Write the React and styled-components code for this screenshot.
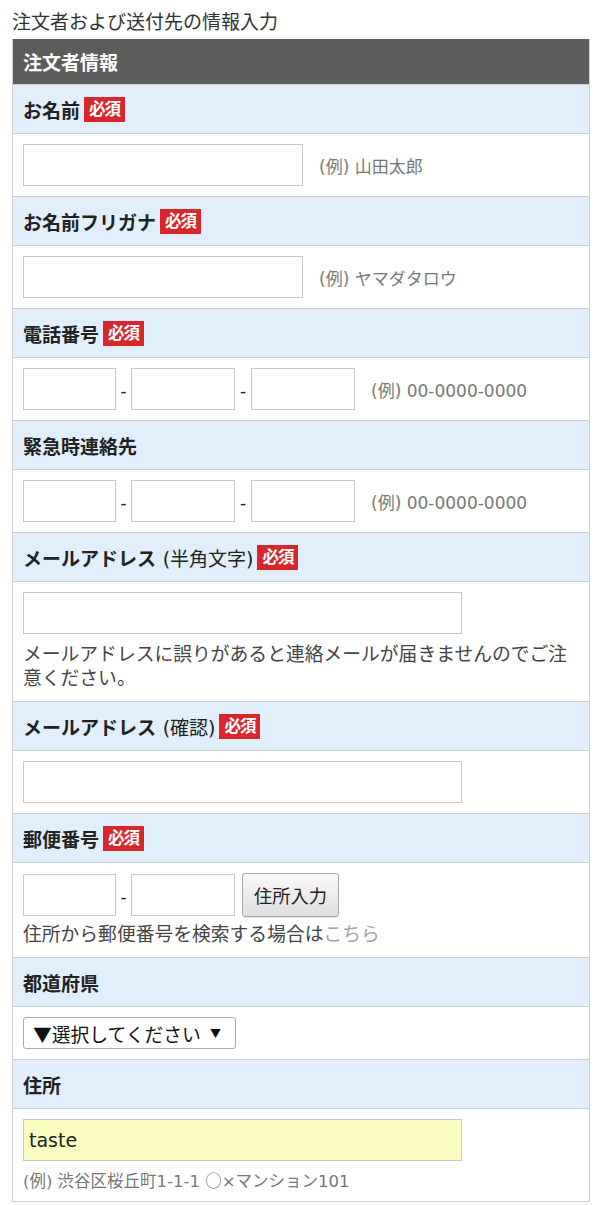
import React from "react";
import styled, { createGlobalStyle } from "styled-components";

const GlobalStyle = createGlobalStyle`
  * { box-sizing: border-box; }
  html, body { margin: 0; padding: 0; background: #ffffff; }
  body {
    font-family: "DejaVu Sans", "Noto Sans CJK JP", "Liberation Sans", sans-serif;
    color: #222;
  }
`;

const Page = styled.div`
  padding: 0 10px 0 12px;
`;

const Title = styled.div`
  font-size: 19px;
  line-height: 24px;
  color: #333;
  padding: 10px 0 5px;
  white-space: nowrap;
`;

const FormTable = styled.div`
  width: 578px;
  border: 1px solid #cfcfcf;
  border-top: none;
  display: flex;
  flex-direction: column;
`;

const TableHeader = styled.div`
  height: 45px;
  background: #5c5c5c;
  color: #ffffff;
  font-weight: 700;
  font-size: 19px;
  display: flex;
  align-items: center;
  padding: 0 10px;
`;

const LabelRow = styled.div`
  height: 49px;
  border-top: 1px solid #cfcfcf;
  background: #e1eefc;
  display: flex;
  align-items: center;
  gap: 4px;
  padding: 0 10px;
`;

const LabelText = styled.span`
  font-size: 19px;
  font-weight: 700;
  color: #222;
  white-space: nowrap;
`;

const LabelSub = styled.span`
  font-weight: 400;
`;

const RequiredBadge = styled.span`
  display: inline-block;
  background: #d9262b;
  color: #ffffff;
  font-weight: 700;
  font-size: 16.5px;
  height: 25px;
  line-height: 25px;
  padding: 0 5px;
  letter-spacing: -1px;
`;

const FieldRow = styled.div`
  border-top: 1px solid #cfcfcf;
  background: #ffffff;
  padding: 10px 10px ${(p) => p.$bottom || 10}px;
  display: flex;
  flex-direction: column;
  align-items: flex-start;
`;

const InlineGroup = styled.div`
  display: flex;
  align-items: center;
`;

const TextInput = styled.input`
  width: ${(p) => p.$width}px;
  height: 42px;
  border: 1px solid #c9c9c9;
  background: ${(p) => (p.$highlight ? "#fbfcc1" : "#ffffff")};
  font-family: inherit;
  font-size: 19px;
  color: #222;
  padding: 0 5px;
  outline: none;
  margin: 0;
`;

const Dash = styled.span`
  width: ${(p) => p.$w || 15}px;
  text-align: center;
  font-size: 17px;
  color: #222;
  padding-top: 4px;
`;

const Example = styled.span`
  margin-left: 16px;
  font-size: 17px;
  color: #777;
  white-space: nowrap;
`;

const Note = styled.div`
  margin-top: ${(p) => p.$top || 8}px;
  font-size: 18.8px;
  line-height: 24px;
  color: ${(p) => (p.$muted ? "#777" : "#444")};
  ${(p) => p.$small && "font-size: 16.5px; line-height: 22px;"}
`;

const CjkGlyph = styled.span`
  font-family: "Noto Sans CJK JP", sans-serif;
`;

const NoteLink = styled.a`
  color: #a3a3a3;
  text-decoration: none;
`;

const AddressButton = styled.button`
  margin-left: 7px;
  width: 97px;
  height: 44px;
  border: 1px solid #a8a8a8;
  border-radius: 3px;
  background: linear-gradient(#f9f9f9, #dfdfdf);
  font-family: inherit;
  font-size: 18.3px;
  color: #222;
  padding: 0;
  box-shadow: 0 1px 1px rgba(0, 0, 0, 0.1);
`;

const SelectBox = styled.div`
  width: 213px;
  height: 32px;
  border: 1px solid #aaaaaa;
  border-radius: 3px;
  background: #ffffff;
  display: flex;
  align-items: center;
  padding: 0 0 0 9px;
  font-family: "Noto Sans CJK JP", sans-serif;
  font-size: 18.8px;
  color: #111;
  white-space: nowrap;
`;

const SelectArrow = styled.span`
  font-size: 11px;
  margin-left: 9px;
  color: #111;
`;

const Label = ({ children, required }) => (
  <LabelRow>
    <LabelText>{children}</LabelText>
    {required && <RequiredBadge>必須</RequiredBadge>}
  </LabelRow>
);

const PhoneFields = ({ example }) => (
  <InlineGroup>
    <TextInput $width={93} />
    <Dash $w={15}>-</Dash>
    <TextInput $width={104} />
    <Dash $w={16}>-</Dash>
    <TextInput $width={104} />
    <Example>{example}</Example>
  </InlineGroup>
);

export default function App() {
  return (
    <>
      <GlobalStyle />
      <Page>
        <Title>注文者および送付先の情報入力</Title>
        <FormTable>
          <TableHeader>注文者情報</TableHeader>

          <Label required>お名前</Label>
          <FieldRow>
            <InlineGroup>
              <TextInput $width={280} />
              <Example>(例) 山田太郎</Example>
            </InlineGroup>
          </FieldRow>

          <Label required>お名前フリガナ</Label>
          <FieldRow>
            <InlineGroup>
              <TextInput $width={280} />
              <Example>(例) ヤマダタロウ</Example>
            </InlineGroup>
          </FieldRow>

          <Label required>電話番号</Label>
          <FieldRow>
            <PhoneFields example="(例) 00-0000-0000" />
          </FieldRow>

          <Label>緊急時連絡先</Label>
          <FieldRow>
            <PhoneFields example="(例) 00-0000-0000" />
          </FieldRow>

          <Label required>
            メールアドレス <LabelSub>(半角文字)</LabelSub>
          </Label>
          <FieldRow>
            <TextInput $width={439} />
            <Note $top={9}>
              メールアドレスに誤りがあると連絡メールが届きませんのでご注意ください。
            </Note>
          </FieldRow>

          <Label required>
            メールアドレス <LabelSub>(確認)</LabelSub>
          </Label>
          <FieldRow>
            <TextInput $width={439} />
          </FieldRow>

          <Label required>郵便番号</Label>
          <FieldRow>
            <InlineGroup>
              <TextInput $width={93} />
              <Dash $w={15}>-</Dash>
              <TextInput $width={104} />
              <AddressButton type="button">住所入力</AddressButton>
            </InlineGroup>
            <Note $top={6}>
              住所から郵便番号を検索する場合は<NoteLink href="#">こちら</NoteLink>
            </Note>
          </FieldRow>

          <Label>都道府県</Label>
          <FieldRow>
            <SelectBox>
              ▼選択してください<SelectArrow>▼</SelectArrow>
            </SelectBox>
          </FieldRow>

          <Label>住所</Label>
          <FieldRow $bottom={8}>
            <TextInput $width={439} $highlight defaultValue="taste" />
            <Note $top={8} $small $muted>
              (例) 渋谷区桜丘町1-1-1 <CjkGlyph>○</CjkGlyph>×マンション101
            </Note>
          </FieldRow>
        </FormTable>
      </Page>
    </>
  );
}
